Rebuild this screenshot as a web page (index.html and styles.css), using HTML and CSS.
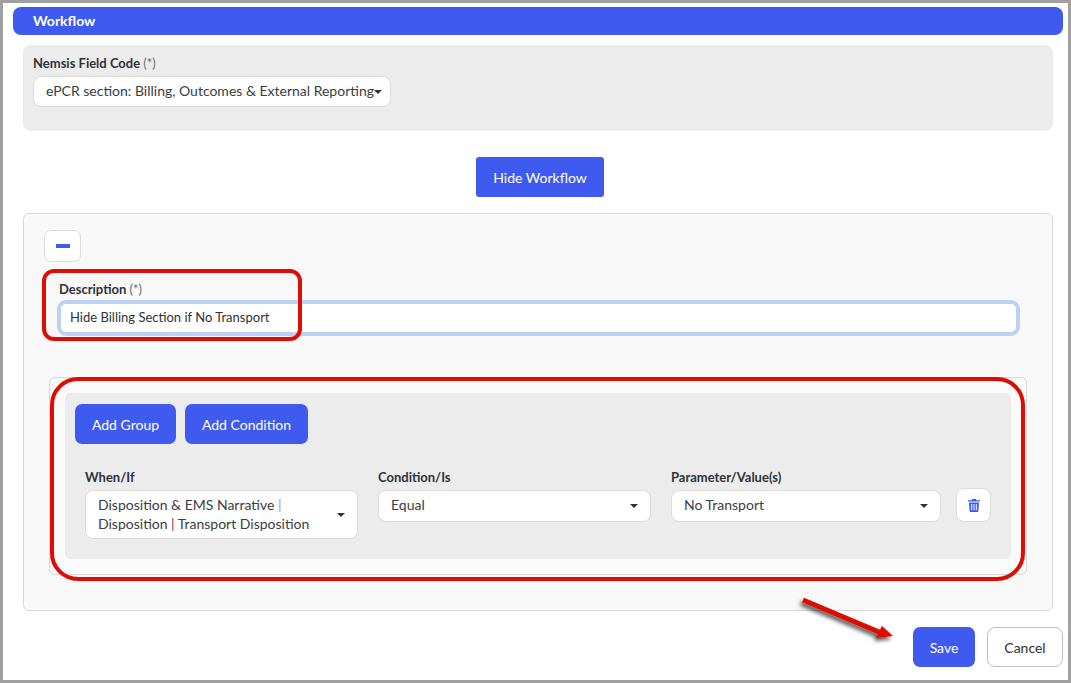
FILE: index.html
```html
<!DOCTYPE html>
<html lang="en">
<head>
    <meta charset="UTF-8">
    <meta name="viewport" content="width=device-width, initial-scale=1.0">
    <title>Workflow</title>
    <link rel="stylesheet" href="styles.css">
</head>
<body>
    <div class="frame">
        <header class="title-bar">Workflow</header>

        <div class="content">
            <!-- Field code -->
            <div class="field-panel">
                <label class="field-label">Nemsis Field Code <span class="req">(*)</span></label>
                <div class="select select-code">
                    <span>ePCR section: Billing, Outcomes &amp; External Reporting</span>
                    <i class="caret"></i>
                </div>
            </div>

            <div class="toggle-row">
                <button class="btn btn-toggle">Hide Workflow</button>
            </div>

            <!-- Workflow card -->
            <div class="card">
                <button class="icon-btn btn-minus"><i class="minus"></i></button>

                <div class="desc">
                    <label class="field-label">Description <span class="req">(*)</span></label>
                    <div class="desc-input">Hide Billing Section if No Transport</div>
                </div>

                <div class="group">
                    <div class="group-inner">
                        <div class="group-actions">
                            <button class="btn btn-group">Add Group</button>
                            <button class="btn btn-cond">Add Condition</button>
                        </div>
                        <div class="rule">
                            <div class="rule-col">
                                <label class="field-label">When/If</label>
                                <div class="select select-tall">
                                    <span>Disposition &amp; EMS Narrative <b class="pipe pipe-blue">|</b><br>Disposition <b class="pipe pipe-plum">|</b> Transport Disposition</span>
                                    <i class="caret"></i>
                                </div>
                            </div>
                            <div class="rule-col">
                                <label class="field-label">Condition/Is</label>
                                <div class="select">
                                    <span>Equal</span>
                                    <i class="caret"></i>
                                </div>
                            </div>
                            <div class="rule-col rule-col-value">
                                <label class="field-label">Parameter/Value(s)</label>
                                <div class="select">
                                    <span>No Transport</span>
                                    <i class="caret"></i>
                                </div>
                            </div>
                            <button class="icon-btn btn-trash">
                                <svg width="12" height="13" viewBox="0 0 12 13">
                                    <path fill="#3f5bef" d="M4.2 0h3.6l.5 1.2H12v1.3H0V1.2h3.7zM1 3.4h10l-.6 8.5c0 .6-.5 1.1-1.1 1.1H2.7c-.6 0-1.1-.5-1.1-1.1zM3.2 5v6.3h1V5zm2.3 0v6.3h1V5zm2.3 0v6.3h1V5z"/>
                                </svg>
                            </button>
                        </div>
                    </div>
                </div>
            </div>

            <div class="actions">
                <button class="btn btn-save">Save</button>
                <button class="btn-cancel">Cancel</button>
            </div>
        </div>

        <!-- Red call-outs drawn over the screenshot -->
        <div class="callout callout-desc"></div>
        <div class="callout callout-group"></div>
        <svg class="callout-arrow" width="110" height="60" viewBox="0 0 110 60">
            <defs>
                <filter id="arrow-shadow" x="-20%" y="-40%" width="140%" height="200%">
                    <feDropShadow dx="-2" dy="3" stdDeviation="2" flood-color="#000" flood-opacity="0.7"/>
                </filter>
            </defs>
            <path filter="url(#arrow-shadow)" fill="#dc0d05" d="M7 7.300 L9 2.700 L85 34.700 L87 31 L98 41 L81 43 L83 39.300 Z"/>
        </svg>
    </div>
</body>
</html>
```

FILE: styles.css
```css
* {
    box-sizing: border-box;
}

body {
    margin: 0;
    font-family: Lato, "Open Sans", sans-serif;
    font-size: 14px;
    color: #2f3237;
    background-color: #fff;
}

.frame {
    position: relative;
    width: 1071px;
    height: 683px;
    border: 3px solid #a0a0a0;
    background-color: #fff;
    overflow: hidden;
}

.title-bar {
    margin: 4px 5px 0 10px;
    height: 28px;
    padding-left: 20px;
    line-height: 28px;
    font-size: 14px;
    font-weight: 700;
    color: #fff;
    background-color: #3f5bef;
    border-radius: 8px;
}

.content {
    padding: 10px 15px 0 20px;
}

.field-panel {
    height: 86px;
    padding: 10px 10px 0;
    background-color: #ececec;
    border-radius: 8px;
}

.field-label {
    display: block;
    height: 21px;
    line-height: 17px;
    font-weight: 700;
    font-size: 13px;
    color: #2f3237;
}

.req {
    font-weight: 400;
    color: #6b7075;
}

.select {
    display: flex;
    align-items: center;
    justify-content: space-between;
    height: 32px;
    padding: 0 12px;
    background-color: #fff;
    border: 1px solid #dcdcdc;
    border-radius: 8px;
    font-size: 14px;
    line-height: 19px;
    color: #3a3d42;
}

.select > span {
    margin-top: -3px;
}

.select-code {
    width: 358px;
    height: 31px;
    padding-right: 8px;
    white-space: nowrap;
}

.select-tall {
    height: 49px;
}

.select-tall > span {
    margin-top: -2px;
}

.pipe {
    font-weight: 400;
}

.pipe-blue {
    color: #7fa6dc;
}

.pipe-plum {
    color: #7a3b5e;
}

.caret {
    flex: none;
    width: 0;
    height: 0;
    border-left: 4.500px solid transparent;
    border-right: 4.500px solid transparent;
    border-top: 4.500px solid #2f3237;
}

.toggle-row {
    display: flex;
    justify-content: center;
    padding: 26px 0 16px;
}

.btn {
    height: 40px;
    padding: 0;
    border: none;
    border-radius: 4px;
    font-family: inherit;
    font-size: 14px;
    color: #fff;
    background-color: #3f5bef;
}

.btn-toggle {
    width: 128px;
    margin-left: 4px;
    border-radius: 3px;
}

.card {
    height: 398px;
    padding: 16px 25px 0 20px;
    background-color: #f8f8f8;
    border: 1px solid #d8d8d8;
    border-radius: 6px;
}

.icon-btn {
    display: flex;
    align-items: center;
    justify-content: center;
    padding: 0;
    background-color: #fff;
    border: 1px solid #dcdcdc;
    border-radius: 7px;
}

.btn-minus {
    width: 37px;
    height: 32px;
}

.minus {
    width: 14px;
    height: 4px;
    background-color: #3f5bef;
}

.desc {
    margin: 19px 7px 0 13px;
}

.desc .field-label {
    height: 20px;
    padding-left: 2px;
}

.desc-input {
    height: 36px;
    margin-top: -1px;
    padding-left: 9px;
    line-height: 27px;
    font-size: 13px;
    color: #2f3237;
    background-color: #fff;
    border: 4px solid #bcd2f5;
    border-radius: 9px;
}

.group {
    height: 198px;
    margin: 41px 0 0 5px;
    padding: 15px;
    background-color: #fafafa;
    border: 1px solid #d8d8d8;
    border-radius: 6px;
}

.group-inner {
    height: 166px;
    padding: 11px 10px 0;
    background-color: #ececec;
    border-radius: 5px;
}

.group-actions {
    display: flex;
    gap: 9px;
}

.btn-group {
    width: 101px;
    border-radius: 7px;
}

.btn-cond {
    width: 123px;
    border-radius: 7px;
}

.rule {
    display: flex;
    align-items: flex-start;
    gap: 20px;
    margin: 25px 0 0 10px;
}

.rule-col {
    width: 273px;
}

.rule-col-value {
    width: 270px;
}

.btn-trash {
    width: 35px;
    height: 34px;
    margin: 19px 0 0 -5px;
    border-radius: 8px;
}

.actions {
    display: flex;
    justify-content: flex-end;
    gap: 12px;
    margin: 16px -10px 0 0;
}

.btn-save {
    width: 62px;
    border-radius: 7px;
}

.btn-cancel {
    width: 76px;
    height: 40px;
    padding: 0;
    font-family: inherit;
    font-size: 14px;
    color: #2f3237;
    background-color: #fff;
    border: 1px solid #b4c0dc;
    border-radius: 8px;
}

.callout {
    position: absolute;
    border: 4px solid #dc0d05;
    pointer-events: none;
}

.callout-desc {
    left: 39px;
    top: 266px;
    width: 260px;
    height: 72px;
    border-radius: 12px;
}

.callout-group {
    left: 47px;
    top: 374px;
    width: 975px;
    height: 204px;
    border-radius: 28px;
}

.callout-arrow {
    position: absolute;
    left: 792px;
    top: 592px;
}
```
